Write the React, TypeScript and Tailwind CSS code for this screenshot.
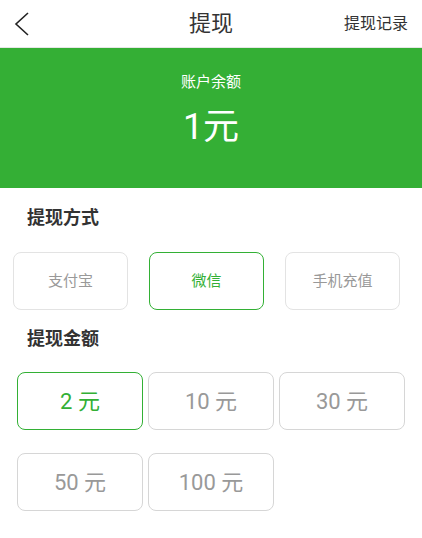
import { useState } from "react"

const methods = ["支付宝", "微信", "手机充值"]
const amounts = [2, 10, 30, 50, 100]

const BackIcon = () => (
  <svg width="16" height="24" viewBox="0 0 16 24" fill="none" stroke="#222" strokeWidth="1.6">
    <path d="M14 1 L2 12 L14 23" />
  </svg>
)

export default function App() {
  const [method, setMethod] = useState(1)
  const [amount, setAmount] = useState(0)

  return (
    <div className="w-[422px] min-h-[538px] bg-white font-['Roboto','Noto_Sans_CJK_SC',sans-serif]">
      <header className="h-[48px] flex items-center justify-between border-b border-[#e6e6e6] px-[14px]">
        <button className="w-[64px] flex items-center">
          <BackIcon />
        </button>
        <h1 className="text-[22px] text-[#333]">提现</h1>
        <button className="w-[64px] text-right text-[16px] text-[#333] whitespace-nowrap">提现记录</button>
      </header>

      <section className="h-[140px] bg-[#34af35] flex flex-col items-center pt-[23px] text-white">
        <div className="text-[15px] leading-[22px]">账户余额</div>
        <div className="text-[36px] leading-[46px] mt-[11px]">1元</div>
      </section>

      <div className="px-[27px] pt-[17px] text-[18px] leading-[26px] font-bold text-[#333]">提现方式</div>
      <div className="flex gap-[21px] px-[13px] pt-[21px]">
        {methods.map((m, i) => (
          <button
            key={m}
            onClick={() => setMethod(i)}
            className={
              i === method
                ? "w-[115px] h-[58px] rounded-[8px] border border-[#33b035] text-[#33b035] text-[15px]"
                : "w-[115px] h-[58px] rounded-[8px] border border-[#e3e3e3] text-[#999] text-[15px]"
            }
          >
            {m}
          </button>
        ))}
      </div>

      <div className="px-[27px] pt-[16px] text-[18px] leading-[26px] font-bold text-[#333]">提现金额</div>
      <div className="grid grid-cols-[126px_126px_126px] gap-x-[5px] gap-y-[23px] px-[17px] pt-[20px]">
        {amounts.map((a, i) => (
          <button
            key={a}
            onClick={() => setAmount(i)}
            className={
              i === amount
                ? "h-[58px] rounded-[8px] border border-[#33b035] text-[#33b035] text-[22px]"
                : "h-[58px] rounded-[8px] border border-[#d6d6d6] text-[#999] text-[22px]"
            }
          >
            {a} 元
          </button>
        ))}
      </div>
    </div>
  )
}
